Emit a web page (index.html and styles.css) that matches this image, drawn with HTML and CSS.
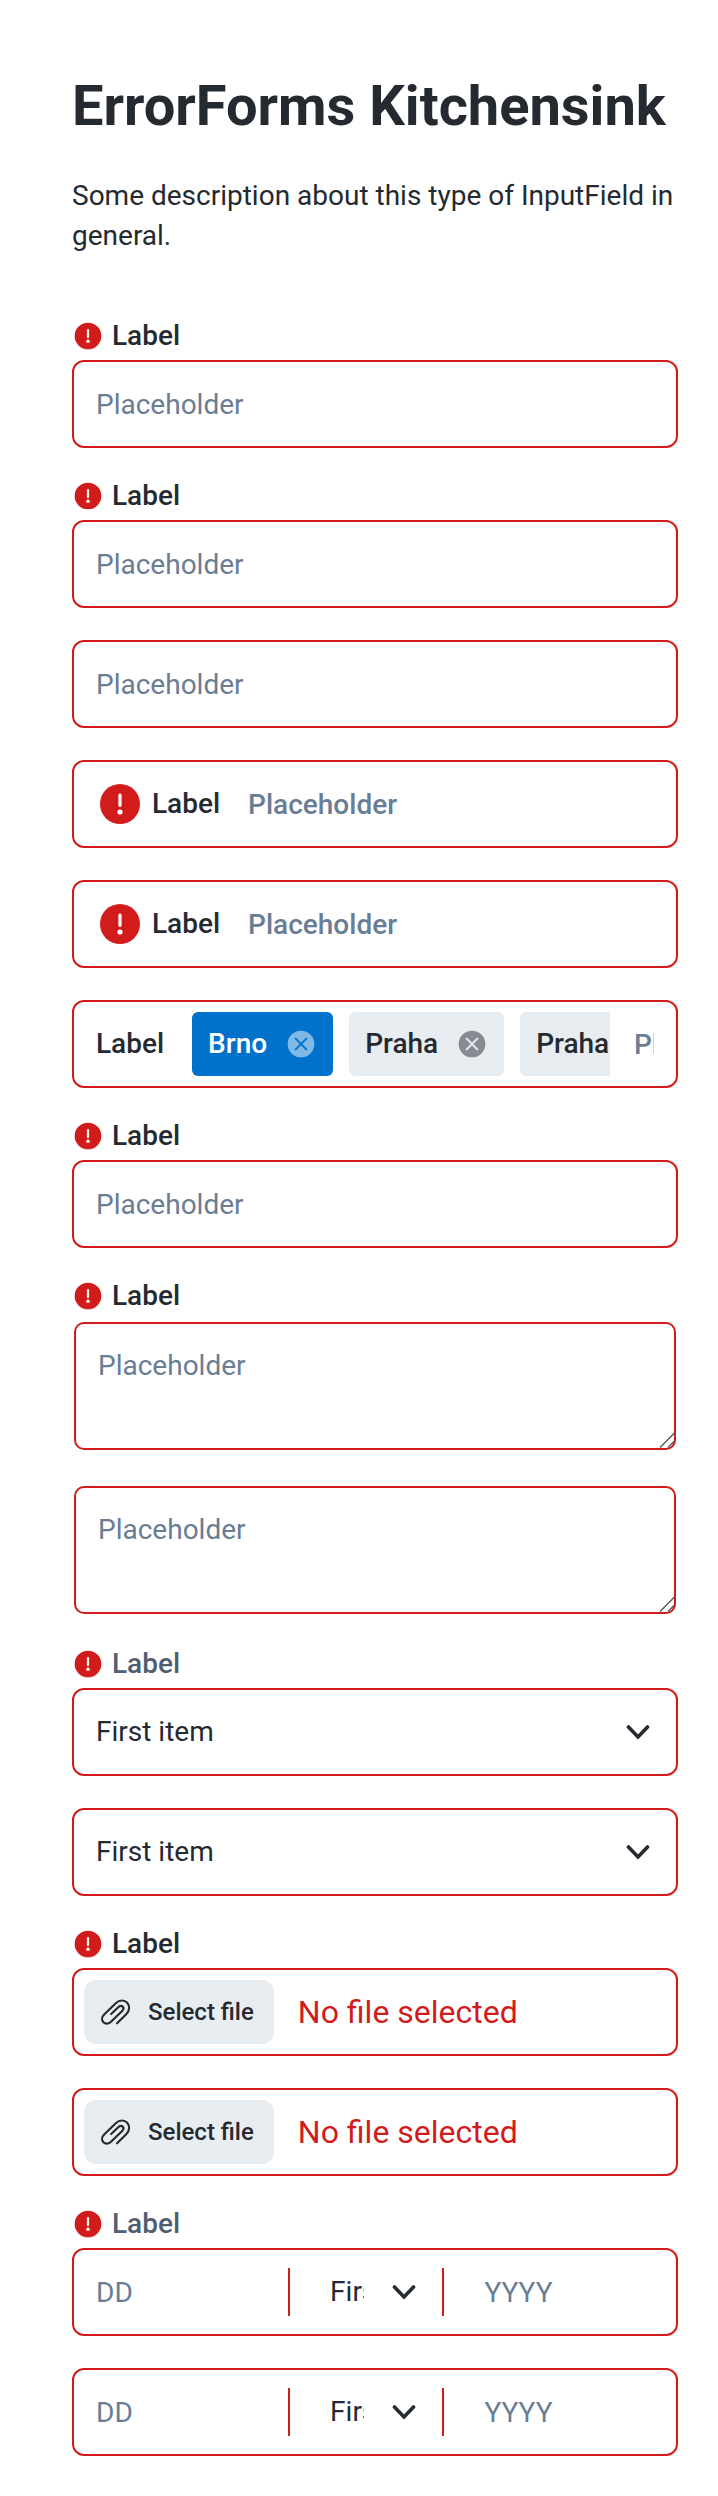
FILE: index.html
```html
<!DOCTYPE html>
<html lang="en">
<head>
<meta charset="utf-8">
<meta name="viewport" content="width=device-width, initial-scale=1">
<title>ErrorForms Kitchensink</title>
<link rel="stylesheet" href="styles.css">
</head>
<body>
<svg class="sprite" aria-hidden="true">
  <symbol id="alert" viewBox="0 0 24 24">
    <circle cx="12" cy="12" r="10" fill="currentColor"/>
    <path d="M12 7.5v5.2" stroke="#fff" stroke-width="1.6" stroke-linecap="round"/>
    <circle cx="12" cy="16" r="1.3" fill="#fff"/>
  </symbol>
  <symbol id="chevron" viewBox="0 0 24 24">
    <path d="M2.500 7 12 17l9.500-10" fill="none" stroke="currentColor" stroke-width="3.600" stroke-linecap="round" stroke-linejoin="miter"/>
  </symbol>
  <symbol id="close" viewBox="0 0 24 24">
    <circle class="close-disc" cx="12" cy="12" r="10"/>
    <path class="close-cross" d="m8 8 8 8m0-8-8 8" stroke-width="1.500" stroke-linecap="round"/>
  </symbol>
  <symbol id="clip" viewBox="0 0 28 26">
    <path d="M15 23.500 23.500 15c3.400-3.300 3.400-7.700 1-10.500-2.700-2.900-7.200-3-10.700.3L3.200 15.100c-2.700 2.600-2.600 5.700-.9 7.500 1.800 1.800 4.900 1.700 7.100-.5l10.300-10c1.500-1.500 1.500-3.100.5-4.100s-2.700-.9-4.100.5l-6.600 6.400" fill="none" stroke="currentColor" stroke-width="2" stroke-linecap="round" stroke-linejoin="round"/>
  </symbol>
  <symbol id="grip" viewBox="0 0 16 16">
    <path d="M1 15.500 15.500 1M9 15.500 15.500 9" fill="none" stroke="#555" stroke-width="1.300"/>
  </symbol>
</svg>
<main class="page">
  <h1 class="title">ErrorForms Kitchensink</h1>
  <p class="description">Some description about this type of InputField in general.</p>
  <form class="stack">
    <div class="group">
      <label class="label" for="f1"><svg class="icon" aria-hidden="true"><use href="#alert"/></svg>Label</label>
      <div class="field"><input class="control" id="f1" type="text" placeholder="Placeholder"></div>
    </div>
    <div class="group">
      <label class="label" for="f2"><svg class="icon" aria-hidden="true"><use href="#alert"/></svg>Label</label>
      <div class="field"><input class="control" id="f2" type="text" placeholder="Placeholder"></div>
    </div>
    <div class="field"><input class="control" type="text" aria-label="Text" placeholder="Placeholder"></div>
    <div class="field field-inline">
      <label class="label-inline" for="f4"><svg class="icon icon-large" aria-hidden="true"><use href="#alert"/></svg>Label</label>
      <input class="control control-inline" id="f4" type="text" placeholder="Placeholder">
    </div>
    <div class="field field-inline">
      <label class="label-inline" for="f5"><svg class="icon icon-large" aria-hidden="true"><use href="#alert"/></svg>Label</label>
      <input class="control control-inline" id="f5" type="text" placeholder="Placeholder">
    </div>
    <div class="field field-inline">
      <label class="label-inline" for="f6">Label</label>
      <div class="tags">
        <span class="tag tag-selected">Brno<button class="tag-close" type="button" aria-label="Remove Brno"><svg class="tag-icon" aria-hidden="true"><use href="#close"/></svg></button></span>
        <span class="tag">Praha<button class="tag-close" type="button" aria-label="Remove Praha"><svg class="tag-icon" aria-hidden="true"><use href="#close"/></svg></button></span>
        <span class="tag">Praha<button class="tag-close" type="button" aria-label="Remove Praha"><svg class="tag-icon" aria-hidden="true"><use href="#close"/></svg></button></span>
      </div>
      <input class="control control-inline control-tags" id="f6" type="text" placeholder="Placeholder">
    </div>
    <div class="group">
      <label class="label" for="f7"><svg class="icon" aria-hidden="true"><use href="#alert"/></svg>Label</label>
      <div class="field"><input class="control" id="f7" type="text" placeholder="Placeholder"></div>
    </div>
    <div class="group">
      <label class="label" for="f8"><svg class="icon" aria-hidden="true"><use href="#alert"/></svg>Label</label>
      <div class="area-wrap"><textarea class="area" id="f8" placeholder="Placeholder"></textarea><svg class="grip" aria-hidden="true"><use href="#grip"/></svg></div>
    </div>
    <div class="area-wrap"><textarea class="area" aria-label="Message" placeholder="Placeholder"></textarea><svg class="grip" aria-hidden="true"><use href="#grip"/></svg></div>
    <div class="group">
      <label class="label label-muted" for="f10"><svg class="icon" aria-hidden="true"><use href="#alert"/></svg>Label</label>
      <div class="field select-box">
        <select class="control select" id="f10"><option>First item</option><option>Second item</option></select>
        <svg class="chevron" aria-hidden="true"><use href="#chevron"/></svg>
      </div>
    </div>
    <div class="field select-box">
      <select class="control select" aria-label="Item"><option>First item</option><option>Second item</option></select>
      <svg class="chevron" aria-hidden="true"><use href="#chevron"/></svg>
    </div>
    <div class="group">
      <label class="label" for="f12"><svg class="icon" aria-hidden="true"><use href="#alert"/></svg>Label</label>
      <div class="field field-file">
        <button class="file-button" id="f12" type="button"><svg class="clip" aria-hidden="true"><use href="#clip"/></svg>Select file</button>
        <span class="file-name">No file selected</span>
      </div>
    </div>
    <div class="field field-file">
      <button class="file-button" type="button"><svg class="clip" aria-hidden="true"><use href="#clip"/></svg>Select file</button>
      <span class="file-name">No file selected</span>
    </div>
    <div class="group">
      <label class="label label-muted" for="f14"><svg class="icon" aria-hidden="true"><use href="#alert"/></svg>Label</label>
      <div class="field field-date">
        <div class="part"><input class="control" id="f14" type="text" placeholder="DD"></div>
        <div class="part select-box">
          <select class="control select select-month" aria-label="Month"><option>First item</option><option>Second item</option></select>
          <svg class="chevron" aria-hidden="true"><use href="#chevron"/></svg>
        </div>
        <div class="part"><input class="control control-year" type="text" aria-label="Year" placeholder="YYYY"></div>
      </div>
    </div>
    <div class="field field-date">
      <div class="part"><input class="control" type="text" aria-label="Day" placeholder="DD"></div>
      <div class="part select-box">
        <select class="control select select-month" aria-label="Month"><option>First item</option><option>Second item</option></select>
        <svg class="chevron" aria-hidden="true"><use href="#chevron"/></svg>
      </div>
      <div class="part"><input class="control control-year" type="text" aria-label="Year" placeholder="YYYY"></div>
    </div>
  </form>
</main>
</body>
</html>
```

FILE: styles.css
```css
:root {
  --ink: #252a31;
  --muted: #4f5e71;
  --placeholder: #697d95;
  --error: #d21c1c;
  --cloud: #e8edf1;
  --blue: #0172cb;
}

* { box-sizing: border-box; }

body {
  margin: 0;
  background: #fff;
  color: var(--ink);
  font-family: Roboto, "Liberation Sans", sans-serif;
  font-size: 28px;
  line-height: 40px;
}

input, select, textarea, button {
  margin: 0;
  font: inherit;
  color: inherit;
}

.sprite { position: absolute; width: 0; height: 0; }

.page { padding: 72px 40px 40px 72px; }

.title {
  margin: 0;
  font-size: 56px;
  line-height: 68px;
  font-weight: 700;
}

.description { margin: 36px 0 64px; }

.stack { display: flex; flex-direction: column; gap: 32px; }

.group { display: flex; flex-direction: column; gap: 8px; }

.label {
  display: flex;
  align-items: center;
  gap: 8px;
  line-height: 32px;
  font-weight: 500;
}

.label-muted { color: var(--muted); }

.icon { width: 32px; height: 32px; flex: none; color: var(--error); }
.icon-large { width: 48px; height: 48px; }

.field {
  display: flex;
  align-items: center;
  height: 88px;
  border: 2px solid var(--error);
  border-radius: 12px;
  background: #fff;
}

.control {
  display: block;
  width: 100%;
  min-width: 0;
  height: 100%;
  padding: 0 22px;
  border: 0;
  background: transparent;
  outline: none;
}

.control::placeholder, .area::placeholder { color: var(--placeholder); opacity: 1; }

.field-inline { gap: 24px; padding: 0 22px; font-weight: 500; }
.label-inline { display: flex; flex: none; align-items: center; gap: 8px; padding-right: 4px; }
.control-inline { flex: 1; padding: 0; }
.control-tags { flex: none; width: 20px; }

.tags { display: flex; flex: 1; gap: 16px; min-width: 0; overflow: hidden; }

.tag {
  display: flex;
  flex: none;
  align-items: center;
  gap: 18px;
  height: 64px;
  padding: 0 16px;
  border-radius: 6px;
  background: var(--cloud);
}

.tag-selected { background: var(--blue); color: #fff; }

.tag-close { display: flex; padding: 0; border: 0; background: none; }
.tag-icon { width: 32px; height: 32px; }
.close-disc { fill: currentColor; fill-opacity: 0.5; }
.close-cross { stroke: var(--cloud); }
.tag-selected .tag-icon { --cloud: var(--blue); }

.area-wrap { position: relative; display: flex; padding: 2px; }

.area {
  width: 100%;
  height: 128px;
  padding: 22px;
  border: 2px solid var(--error);
  border-radius: 10px;
  background: #fff;
  outline: none;
  resize: vertical;
}

.area::-webkit-resizer { background: transparent; }

.grip {
  position: absolute;
  right: 3px;
  bottom: 4px;
  width: 16px;
  height: 16px;
  pointer-events: none;
}

.select-box { position: relative; }
.select { appearance: none; padding-right: 78px; }

.chevron {
  position: absolute;
  right: 26px;
  top: 50%;
  width: 24px;
  height: 24px;
  transform: translateY(-50%);
  pointer-events: none;
}

.field-file { gap: 24px; padding: 0 10px; }

.file-button {
  display: flex;
  align-items: center;
  gap: 16px;
  height: 64px;
  padding: 0 20px 0 16px;
  border: 0;
  border-radius: 12px;
  background: var(--cloud);
  font-size: 24px;
  font-weight: 500;
}

.clip { width: 32px; height: 28px; }
.file-name { color: var(--error); font-size: 32px; }

.field-date { display: grid; grid-template-columns: 14fr 10fr 15fr; }
.part { height: 48px; min-width: 0; }
.part:not(:last-child) { border-right: 2px solid var(--error); }
.select-month { padding-left: 40px; }
.control-year { padding-left: 40px; }
```
